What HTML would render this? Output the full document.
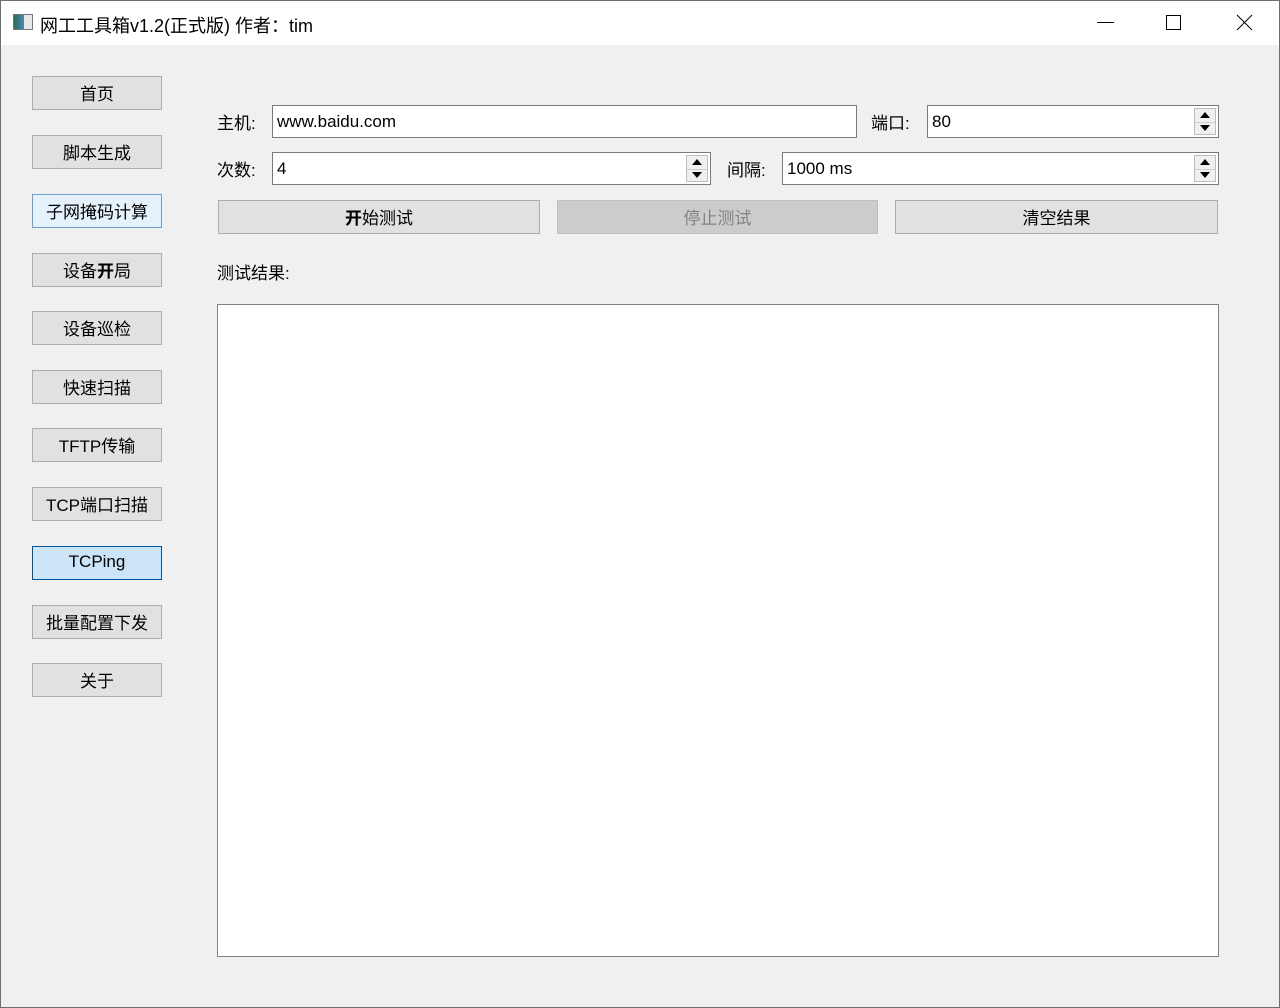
<!DOCTYPE html>
<html><head><meta charset="utf-8"><style>
*{box-sizing:border-box;margin:0;padding:0}
body{width:1280px;height:1008px;overflow:hidden;background:#f0f0f0;font-family:"Liberation Sans","Noto Sans CJK SC",sans-serif;font-size:17px;color:#000;position:relative}
.frame{position:absolute;left:0;top:0;width:1280px;height:1008px;border:1px solid #6f6f6f;pointer-events:none}
.title{position:absolute;left:0;top:0;width:1280px;height:45px;background:#fff}
.a{position:absolute}
.btn{position:absolute;background:#e1e1e1;border:1px solid #adadad;display:flex;align-items:center;justify-content:center;font-size:17px;padding-bottom:2px}
.lb{position:absolute;width:130px;height:34px;left:32px}
.in{position:absolute;background:#fff;border:1px solid #7a7a7a;height:33px;padding-left:4px;display:flex;align-items:center}
.sp{position:absolute;right:2px;top:2px;width:22px;height:27px;border:1px solid #bdbdbd;background:#f0f0f0}
.sp div{height:12.5px;display:flex;align-items:center;justify-content:center}
.sp div+div{border-top:1px solid #d0d0d0}
.up{width:0;height:0;border-left:5px solid transparent;border-right:5px solid transparent;border-bottom:6px solid #000}
.dn{width:0;height:0;border-left:5px solid transparent;border-right:5px solid transparent;border-top:6px solid #000}
</style></head><body>
<div class="title"></div>
<div class="a" style="left:13px;top:14px;width:20px;height:16px;border:1px solid #777;background:linear-gradient(90deg,#2d6a5a 0,#4a8ab0 55%,#e8e8e8 56%)"></div>
<div class="a" style="left:40px;top:12px;font-size:18px">网工工具箱v1.2(正式版) 作者：tim</div>
<svg class="a" style="left:1090px;top:12px" width="170" height="22">
<line x1="7" y1="10.5" x2="24" y2="10.5" stroke="#000" stroke-width="1"/>
<rect x="76.5" y="3.5" width="14" height="14" fill="none" stroke="#000"/>
<line x1="147" y1="3" x2="162" y2="18" stroke="#000"/><line x1="162" y1="3" x2="147" y2="18" stroke="#000"/>
</svg>

<div class="btn lb" style="top:76px">首页</div>
<div class="btn lb" style="top:135px">脚本生成</div>
<div class="btn lb" style="top:194px;background:#e5f1fb;border-color:#6f9ccb">子网掩码计算</div>
<div class="btn lb" style="top:253px">设备<b>开</b>局</div>
<div class="btn lb" style="top:311px">设备巡检</div>
<div class="btn lb" style="top:370px">快速扫描</div>
<div class="btn lb" style="top:428px">TFTP传输</div>
<div class="btn lb" style="top:487px">TCP端口扫描</div>
<div class="btn lb" style="top:546px;background:#cce4f7;border-color:#005499">TCPing</div>
<div class="btn lb" style="top:605px">批量配置下发</div>
<div class="btn lb" style="top:663px">关于</div>

<div class="a" style="left:217px;top:109px">主机:</div>
<div class="in" style="left:272px;top:105px;width:585px">www.baidu.com</div>
<div class="a" style="left:871px;top:109px">端口:</div>
<div class="in" style="left:927px;top:105px;width:292px">80<div class="sp"><div><span class="up"></span></div><div><span class="dn"></span></div></div></div>
<div class="a" style="left:217px;top:156px">次数:</div>
<div class="in" style="left:272px;top:152px;width:439px">4<div class="sp"><div><span class="up"></span></div><div><span class="dn"></span></div></div></div>
<div class="a" style="left:727px;top:156px">间隔:</div>
<div class="in" style="left:782px;top:152px;width:437px">1000 ms<div class="sp"><div><span class="up"></span></div><div><span class="dn"></span></div></div></div>

<div class="btn" style="left:218px;top:200px;width:322px;height:34px"><b>开</b>始测试</div>
<div class="btn" style="left:557px;top:200px;width:321px;height:34px;background:#cccccc;border-color:#bfbfbf;color:#838383">停止测试</div>
<div class="btn" style="left:895px;top:200px;width:323px;height:34px">清空结果</div>

<div class="a" style="left:217px;top:259px">测试结果:</div>
<div class="a" style="left:217px;top:304px;width:1002px;height:653px;background:#fff;border:1px solid #828282"></div>
<div class="frame"></div>
</body></html>
